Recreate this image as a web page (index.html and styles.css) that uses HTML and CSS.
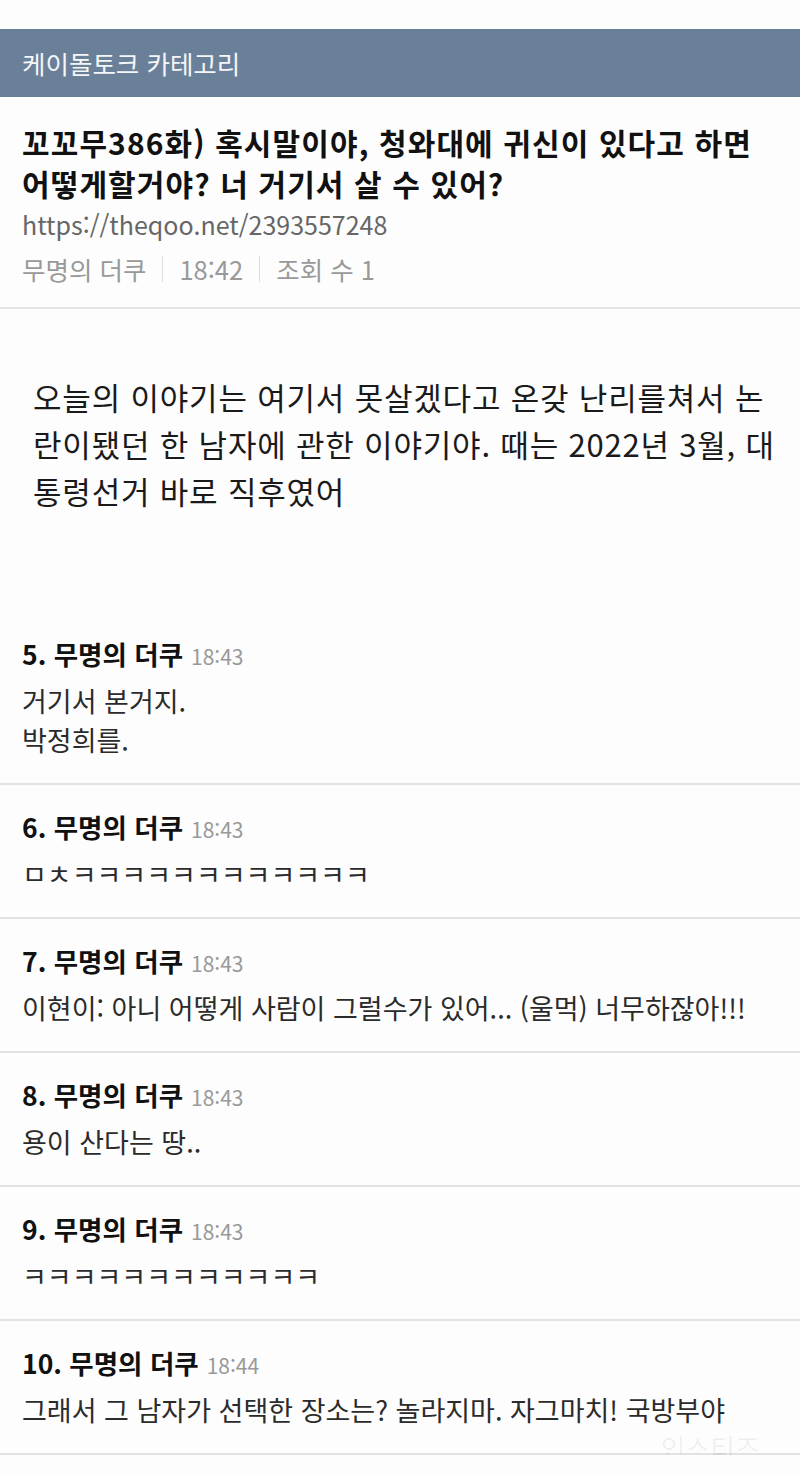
FILE: index.html
```html
<!DOCTYPE html>
<html lang="ko">
<head>
<meta charset="utf-8">
<link rel="stylesheet" href="styles.css">
</head>
<body>
<div class="page">
  <div class="topbar">케이돌토크 카테고리</div>
  <div class="post-head">
    <h1 class="title">꼬꼬무386화) 혹시말이야, 청와대에 귀신이 있다고 하면 어떻게할거야? 너 거기서 살 수 있어?</h1>
    <div class="url">https://theqoo.net/2393557248</div>
    <div class="meta"><span>무명의 더쿠</span><span class="sep"></span><span>18:42</span><span class="sep"></span><span>조회 수 1</span></div>
  </div>
  <div class="post-body">
    <p>오늘의 이야기는 여기서 못살겠다고 온갖 난리를쳐서 논란이됐던 한 남자에 관한 이야기야. 때는 2022년 3월, 대통령선거 바로 직후였어</p>
  </div>
  <div class="comments">
    <div class="comment">
      <div class="c-head"><span class="c-name">5. 무명의 더쿠</span><span class="c-time">18:43</span></div>
      <div class="c-text">거기서 본거지.<br>박정희를.</div>
    </div>
    <div class="comment">
      <div class="c-head"><span class="c-name">6. 무명의 더쿠</span><span class="c-time">18:43</span></div>
      <div class="c-text">ㅁㅊㅋㅋㅋㅋㅋㅋㅋㅋㅋㅋㅋㅋ</div>
    </div>
    <div class="comment">
      <div class="c-head"><span class="c-name">7. 무명의 더쿠</span><span class="c-time">18:43</span></div>
      <div class="c-text">이현이: 아니 어떻게 사람이 그럴수가 있어... (울먹) 너무하잖아!!!</div>
    </div>
    <div class="comment">
      <div class="c-head"><span class="c-name">8. 무명의 더쿠</span><span class="c-time">18:43</span></div>
      <div class="c-text">용이 산다는 땅..</div>
    </div>
    <div class="comment">
      <div class="c-head"><span class="c-name">9. 무명의 더쿠</span><span class="c-time">18:43</span></div>
      <div class="c-text">ㅋㅋㅋㅋㅋㅋㅋㅋㅋㅋㅋㅋ</div>
    </div>
    <div class="comment">
      <div class="c-head"><span class="c-name">10. 무명의 더쿠</span><span class="c-time">18:44</span></div>
      <div class="c-text">그래서 그 남자가 선택한 장소는? 놀라지마. 자그마치! 국방부야</div>
      <div class="watermark">인스티즈</div>
    </div>
  </div>
</div>
</body>
</html>
```

FILE: styles.css
```css
* { box-sizing: border-box; }
html, body { margin: 0; padding: 0; background: #fdfdfd; }
body {
  font-family: "Noto Sans CJK KR", "Noto Sans", sans-serif;
  color: #222;
}
.page { width: 800px; padding-top: 29px; }
.topbar {
  height: 68px;
  background: #6a8099;
  color: #f4f6f8;
  font-size: 25.5px;
  line-height: 68px;
  padding-left: 22px;
}
.post-head {
  padding: 25px 22px 22px;
  border-bottom: 2px solid #e4e4e4;
}
.title {
  margin: 0;
  font-size: 30px;
  letter-spacing: 1.1px;
  font-weight: 700;
  line-height: 41px;
  color: #111;
}
.url {
  font-size: 25px;
  line-height: 32px;
  color: #666;
  margin-top: 4px;
}
.meta {
  display: flex;
  align-items: center;
  font-size: 25.5px;
  line-height: 32px;
  color: #999;
  margin-top: 13px;
}
.sep {
  width: 1px;
  height: 26px;
  background: #ddd;
  margin: 0 16px;
}
.post-body {
  padding: 64px 18px 0 33px;
  height: 303px;
}
.post-body p {
  margin: 0;
  font-size: 31px;
  letter-spacing: 0.8px;
  line-height: 47px;
  color: #1a1a1a;
}
.comment {
  position: relative;
  padding: 26px 22px 24px;
  border-bottom: 2px solid #e2e2e2;
}
.c-head {
  display: flex;
  align-items: baseline;
  gap: 8px;
  height: 34px;
  line-height: 32px;
}
.c-name { font-size: 26.5px; font-weight: 700; color: #111; }
.c-time { font-size: 21px; color: #999; }
.c-text {
  margin-top: 9px;
  font-size: 27px;
  line-height: 39px;
  color: #2b2b2b;
}
.watermark {
  position: absolute;
  right: 40px;
  bottom: -14px;
  font-size: 27px;
  color: rgba(0,0,0,0.06);
}
```
